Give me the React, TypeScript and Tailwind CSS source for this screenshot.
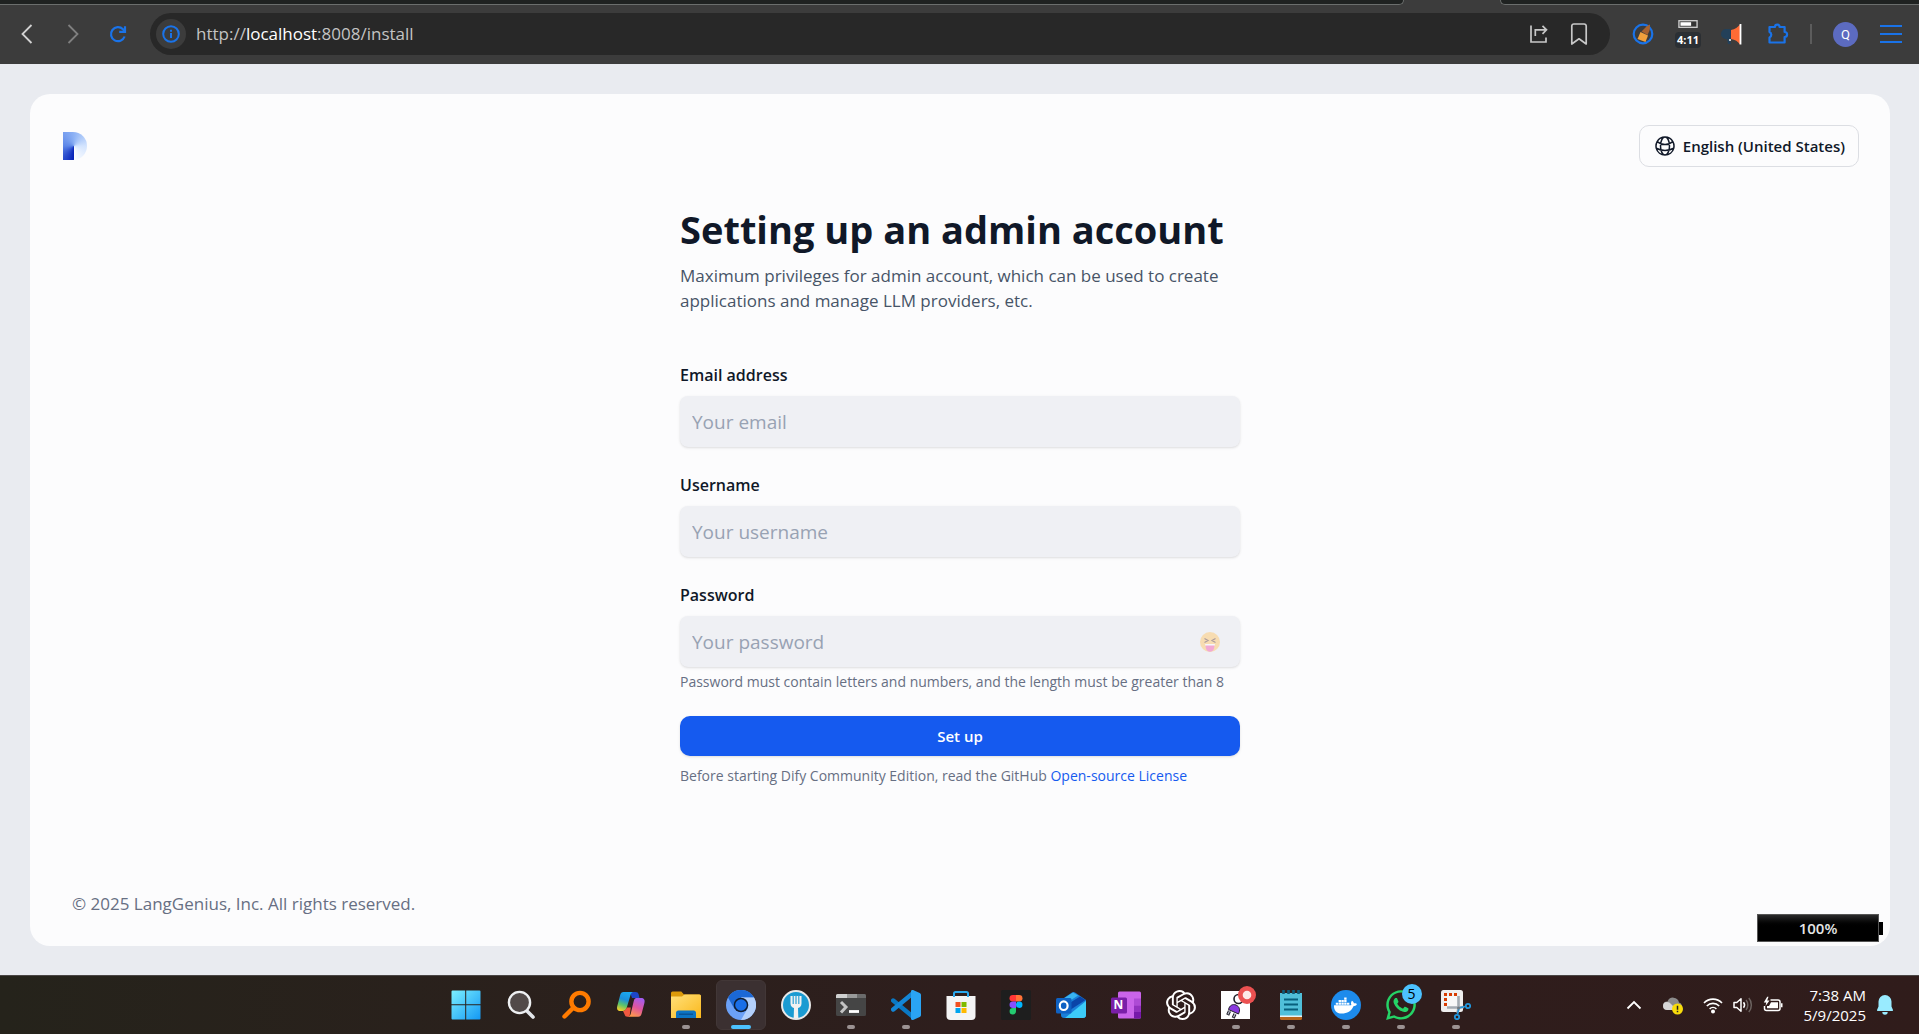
import type { ReactNode } from "react";
import { HiOutlineGlobeAlt } from "react-icons/hi2";
import { SiOpenai } from "react-icons/si";
import { FaDocker, FaWhatsapp } from "react-icons/fa";

function IconButton({ label, className = "", children }: { label: string; className?: string; children: ReactNode }) {
  return (
    <button type="button" aria-label={label} className={`flex shrink-0 items-center justify-center ${className}`}>
      {children}
    </button>
  );
}

/* ---------- Browser chrome ---------- */

function TabStrip() {
  return (
    <div className="flex h-[5px]">
      <div className="flex-1 rounded-br-lg border-r border-b border-[#6b6e6d] bg-[#1f2221]" />
      <div className="w-[96px]" />
      <div className="w-[419px] rounded-bl-lg border-b border-l border-[#6b6e6d] bg-[#1f2221]" />
    </div>
  );
}

function BrowserBar() {
  return (
    <header className="bg-[#3c3c3c]">
      <TabStrip />
      <div className="flex items-center px-[17px] pt-2 pb-[9px]">
        <IconButton label="Back" className="size-5">
          <svg width="20" height="22" viewBox="0 0 20 22" fill="none" stroke="#d2d2d2" strokeWidth="1.8">
            <path d="M14.500 2 5.500 11l9 9" />
          </svg>
        </IconButton>
        <IconButton label="Forward" className="ml-[26px] size-5">
          <svg width="20" height="22" viewBox="0 0 20 22" fill="none" stroke="#808080" strokeWidth="1.8">
            <path d="m5.500 2 9 9-9 9" />
          </svg>
        </IconButton>
        <IconButton label="Reload" className="ml-[25px] size-5">
          <svg width="20" height="20" viewBox="0 0 20 20" fill="none" stroke="#1a73e8" strokeWidth="2.200">
            <path d="M16.600 12.500A7 7 0 1 1 15 5.300l1.500 1.700" />
            <path d="M17 2.200v5.600h-5.800" />
          </svg>
        </IconButton>
        <div className="ml-[22px] flex h-[42px] flex-1 items-center rounded-full bg-[#282828] pr-[21px]">
          <IconButton label="Site information" className="ml-[6px] size-[30px] rounded-full bg-[#3c3c3c]">
            <svg width="18" height="18" viewBox="0 0 18 18" fill="none" stroke="#1a73e8" strokeWidth="2">
              <circle cx="9" cy="9" r="7.800" />
              <path d="M9 8v5M9 4.700v2" />
            </svg>
          </IconButton>
          <div className="ml-[10px] flex-1 text-[17px] leading-6 text-[#c3c3c3]">
            http://<span className="text-white">localhost</span>:8008/install
          </div>
          <IconButton label="Share" className="size-5">
            <svg width="20" height="20" viewBox="0 0 20 20" fill="none" stroke="#c7c7c7" strokeWidth="1.700">
              <path d="M2 1.500V18h15v-4.500M6.300 12V5.800H17M13.500 1.800l4 4-4 4" />
            </svg>
          </IconButton>
          <IconButton label="Bookmark" className="ml-5 size-5">
            <svg width="20" height="22" viewBox="0 0 20 22" fill="none" stroke="#c7c7c7" strokeWidth="1.700" strokeLinejoin="round">
              <path d="M2.800 3a2 2 0 0 1 2-2h10.400a2 2 0 0 1 2 2v18L10 15.800 2.800 21z" />
            </svg>
          </IconButton>
        </div>
        <IconButton label="Cleaner extension" className="ml-[22px] size-[22px]">
          <svg width="22" height="22" viewBox="0 0 22 22">
            <circle cx="11" cy="11" r="9.300" fill="none" stroke="#1a73e8" strokeWidth="2.200" />
            <path d="m15 3 3-1.500-.3 5.500-2.200 5-6-3.500z" fill="#a8622f" />
            <path d="m8.500 9 7.500 3.500-2.500 6.500-8-3z" fill="#f0a03c" />
          </svg>
        </IconButton>
        <IconButton label="Battery extension" className="ml-[18px] h-7 w-8 flex-col">
          <svg width="22" height="9" viewBox="0 0 22 9">
            <rect x=".8" y=".8" width="20.400" height="7.400" fill="#333" stroke="#d0d0d0" strokeWidth="1.500" />
            <rect x="2.500" y="2.500" width="12" height="4" fill="#fff" />
          </svg>
          <span className="mt-1 rounded-sm bg-[#2b2f33] px-0.5 text-[11px] leading-[16px] font-bold text-white">4:11</span>
        </IconButton>
        <IconButton label="Announcements extension" className="ml-[17px] size-[22px]">
          <svg width="22" height="22" viewBox="0 0 22 22">
            <path d="M10 6H5a4.500 4.500 0 0 0 0 10h1l1 5h3l-1-5h1z" fill="#234059" />
            <path d="M10 7c4-.5 7-3 9-5.500v20c-2-3-5-5-9-5.500z" fill="#ff6b35" />
            <path d="M19.500 1v20.500" stroke="#fff" strokeWidth="1.800" />
            <circle cx="9" cy="17" r="1" fill="#fff" />
          </svg>
        </IconButton>
        <IconButton label="Extensions" className="ml-6 size-[22px]">
          <svg width="22" height="22" viewBox="0 0 22 22" fill="none" stroke="#1a73e8" strokeWidth="2.200" strokeLinejoin="round">
            <path d="M2.500 4h5.500a2.300 2.300 0 0 1 4.600 0h5v5a2.500 2.500 0 0 1 0 5v5.500H2.500v-5a3 3 0 0 0 0-5.500z" />
          </svg>
        </IconButton>
        <div className="ml-[21px] h-5 w-[2px] bg-[#5c5c5c]" />
        <button type="button" className="ml-[21px] size-[25px] rounded-full bg-[#5c6bc0] font-[Roboto] text-[13px] leading-[25px] text-white">
          Q
        </button>
        <IconButton label="Menu" className="ml-[22px] size-[22px]">
          <svg width="22" height="20" viewBox="0 0 22 20" stroke="#1a73e8" strokeWidth="2.200">
            <path d="M0 2h22M0 10h22M0 18h22" />
          </svg>
        </IconButton>
      </div>
    </header>
  );
}

/* ---------- Page ---------- */

function Logo() {
  return (
    <div className="h-7 w-6 rounded-r-full bg-[conic-gradient(from_180deg_at_11px_14px,#0420b8,#5c86e8_25%,#8db2f5_50%,#d3e4fe_75%,#fbfcff)]" />
  );
}

function EmojiFace() {
  return (
    <svg width="20" height="20" viewBox="0 0 20 20" opacity=".5">
      <circle cx="10" cy="10" r="10" fill="#ffc971" />
      <path d="m4.500 6.500 3.500 2-3.500 2M15.500 6.500l-3.500 2 3.500 2" fill="none" stroke="#6b4a4a" strokeWidth="1.200" />
      <path d="M5 12h10l-.6 2H5.600z" fill="#fff" />
      <path d="M5.600 13.500h8.800c0 4-1.500 6.200-4.400 6.200s-4.400-2.200-4.400-6.200z" fill="#f564b4" />
    </svg>
  );
}

function Field({ id, label, type, placeholder, children }: { id: string; label: string; type: string; placeholder: string; children?: ReactNode }) {
  return (
    <div>
      <label htmlFor={id} className="block text-[16px] leading-6 font-semibold text-[#101828]">
        {label}
      </label>
      <div className="relative mt-[9px]">
        <input
          id={id}
          type={type}
          placeholder={placeholder}
          className="block h-[51px] w-full rounded-lg bg-[#eff0f4] px-3 text-[19px] shadow-sm placeholder:text-[#98a2b3]"
        />
        {children}
      </div>
    </div>
  );
}

function SetupForm() {
  return (
    <form className="mx-auto w-full max-w-[560px]">
      <h1 className="text-[38px] leading-[48px] font-bold text-[#101828]">Setting up an admin account</h1>
      <p className="mt-[10px] text-[17px] leading-[25px] text-[#475467]">
        Maximum privileges for admin account, which can be used to create applications and manage LLM providers, etc.
      </p>
      <div className="mt-[50px] flex flex-col gap-[26px]">
        <Field id="email" label="Email address" type="email" placeholder="Your email" />
        <Field id="username" label="Username" type="text" placeholder="Your username" />
        <Field id="password" label="Password" type="password" placeholder="Your password">
          <button type="button" aria-label="Show password" className="absolute inset-y-0 right-5 flex items-center">
            <EmojiFace />
          </button>
        </Field>
      </div>
      <p className="mt-[5px] text-[14px] leading-5 text-[#676f83]">
        Password must contain letters and numbers, and the length must be greater than 8
      </p>
      <button type="submit" className="mt-6 h-10 w-full rounded-[10px] bg-[#155aef] text-[15px] font-semibold text-white shadow-sm">
        Set up
      </button>
      <p className="mt-[10px] text-[14px] leading-5 text-[#676f83]">
        Before starting Dify Community Edition, read the GitHub{" "}
        <a href="#license" className="text-[#155aef]">
          Open-source License
        </a>
      </p>
    </form>
  );
}

function BatteryOverlay() {
  return (
    <div className="absolute right-[7px] bottom-1 flex items-center">
      <div className="w-[122px] border border-[#555] bg-linear-to-b from-[#2b2b2b] to-black to-50% text-center text-[15px] leading-[26px] font-semibold text-[#e5e5e5]">
        100%
      </div>
      <div className="h-[13px] w-1 bg-black" />
    </div>
  );
}

function InstallPage() {
  return (
    <main className="flex flex-1 flex-col bg-[#e9ebf0] pt-[30px] pr-[29px] pb-[29px] pl-[30px]">
      <div className="relative flex flex-1 flex-col rounded-[20px] bg-[#fcfcfd]">
        <div className="flex items-center justify-between pt-[31px] pr-[31px] pl-[33px]">
          <Logo />
          <button type="button" className="flex h-[42px] items-center gap-1.5 rounded-[10px] border border-[#dcdee3] px-[13px] text-[15px] font-semibold text-[#101828]">
            <HiOutlineGlobeAlt size={24} />
            English (United States)
          </button>
        </div>
        <div className="flex flex-1 flex-col px-6 pt-[38px]">
          <SetupForm />
        </div>
        <footer className="px-[42px] pb-[30px] text-[17px] leading-6 text-[#676f83]">
          © 2025 LangGenius, Inc. All rights reserved.
        </footer>
        <BatteryOverlay />
      </div>
    </main>
  );
}

/* ---------- Taskbar ---------- */

const WindowsIcon = (
  <svg width="30" height="30" viewBox="0 0 30 30">
    <defs>
      <linearGradient id="win" x1="0" y1="0" x2="1" y2="1">
        <stop offset="0" stopColor="#7cf0ff" />
        <stop offset="1" stopColor="#1398f5" />
      </linearGradient>
    </defs>
    <path d="M.5 1.500a1 1 0 0 1 1-1h12.700v13.700H.5zM15.200.5h13.300a1 1 0 0 1 1 1v12.700H15.200zM.5 15.200h13.700v14.300H1.500a1 1 0 0 1-1-1zM15.200 15.200h14.300v13.300a1 1 0 0 1-1 1H15.200z" fill="url(#win)" />
  </svg>
);
const SearchIcon = (
  <svg width="30" height="30" viewBox="0 0 30 30">
    <path d="m20 20 7 7" stroke="#e3e6ea" strokeWidth="3.600" strokeLinecap="round" />
    <circle cx="13.500" cy="12.500" r="10.600" fill="#524a49" stroke="#eef0f2" strokeWidth="2.400" />
  </svg>
);
const LoupeIcon = (
  <svg width="30" height="30" viewBox="0 0 30 30" fill="none" stroke="#ff7b00">
    <circle cx="19" cy="11.500" r="8.600" strokeWidth="4.400" />
    <path d="m12.500 17.500-9 9" strokeWidth="4.400" strokeLinecap="round" />
  </svg>
);
const CopilotIcon = (
  <svg width="30" height="30" viewBox="0 0 30 30">
    <defs>
      <linearGradient id="cpA" x1="0.600" y1="0" x2="0.300" y2="1">
        <stop offset="0" stopColor="#1aa9f0" />
        <stop offset=".4" stopColor="#1c8fdc" />
        <stop offset=".7" stopColor="#5cc46a" />
        <stop offset="1" stopColor="#f2ce2b" />
      </linearGradient>
      <linearGradient id="cpB" x1="0.700" y1="0" x2="0.300" y2="1">
        <stop offset="0" stopColor="#a35cf0" />
        <stop offset=".5" stopColor="#e0559d" />
        <stop offset="1" stopColor="#ff9a4a" />
      </linearGradient>
    </defs>
    <path d="M14 2h5.500c1.800 0 2.700.8 3.200 2.500L23.500 8H16z" fill="#1d46c8" />
    <path d="M7.500 2H17c-1.500.5-2 1.500-2.500 3l-3.700 12.500c-.7 2.300-1.800 3.500-4 3.500H4.500C1.500 21 .5 19 1.300 16L4.200 5c.6-2 1.500-3 3.300-3z" fill="url(#cpA)" />
    <path d="M7 21c2-.3 3-1.200 3.800-3.500h4l-1.300 9.300h-2c-1.800 0-2.500-.8-3-2.500z" fill="#f0583f" />
    <path d="M20 8h5c3 0 4.200 2 3.400 5l-2.800 10.800c-.6 2-1.500 3-3.300 3H12c1.500-.3 2.200-1.300 2.700-3l3-12.600c.5-1.800 1-2.700 2.300-3.200z" fill="url(#cpB)" />
  </svg>
);
const FolderIcon = (
  <svg width="30" height="30" viewBox="0 0 30 30">
    <defs>
      <linearGradient id="fold" x1="0" y1="0" x2="1" y2="1">
        <stop offset="0" stopColor="#ffe07a" />
        <stop offset="1" stopColor="#fbb81c" />
      </linearGradient>
    </defs>
    <path d="M0 3a1.500 1.500 0 0 1 1.500-1.500h8.800L13 4.500h15a2 2 0 0 1 2 2V10H0z" fill="#dc9a0a" />
    <path d="M0 6.500h11l2.500-2H28.500A1.500 1.500 0 0 1 30 6v22H0z" fill="url(#fold)" />
    <path d="M5 28v-5a2.500 2.500 0 0 1 2.500-2.500h15A2.500 2.500 0 0 1 25 23v5z" fill="#0c74c4" />
    <path d="M8 24.200h14" stroke="#0a4f8f" strokeWidth="1.300" />
  </svg>
);
const ChromiumIcon = (
  <svg width="30" height="30" viewBox="0 0 30 30">
    <circle cx="15" cy="15" r="15" fill="#6ba1f7" />
    <path d="M2 7.500a15 15 0 0 1 26 0H15L8.500 19z" fill="#1b68d6" />
    <path d="M28 7.500A15 15 0 0 1 15 30l6.500-11.300L15 7.500z" fill="#b3d0fb" />
    <circle cx="15" cy="15" r="7.300" fill="#111d30" />
    <circle cx="15" cy="15" r="5.800" fill="#1a6fe8" />
  </svg>
);
const ForkIcon = (
  <svg width="30" height="30" viewBox="0 0 30 30">
    <circle cx="15" cy="15" r="14" fill="#1a9bd2" stroke="#e9e9e9" strokeWidth="2" />
    <path d="M9.500 6v7.500c0 2.500 1.500 4 3.500 4.600L12.700 28h4.600l-.3-9.900c2-.6 3.500-2.100 3.500-4.600V6z" fill="#f1f1f1" />
    <path d="M12.200 5v9M15 5v9M17.800 5v9" stroke="#2fa3d6" strokeWidth="1.200" />
  </svg>
);
const TerminalIcon = (
  <svg width="30" height="30" viewBox="0 0 30 30">
    <path d="M0 5.500A1.500 1.500 0 0 1 1.500 4h27A1.500 1.500 0 0 1 30 5.500v19a1.500 1.500 0 0 1-1.500 1.500h-27A1.500 1.500 0 0 1 0 24.500z" fill="#454545" />
    <path d="M0 8V5.500A1.500 1.500 0 0 1 1.500 4H11v4z" fill="#d0d0d0" />
    <path d="M11 4h10v4H11z" fill="#999" />
    <path d="M21 4h7.500A1.500 1.500 0 0 1 30 5.500V8h-9z" fill="#6b6b6b" />
    <path d="m5 12 5 5-5 5.500" fill="none" stroke="#c4c4c4" strokeWidth="3" />
    <path d="M13 21.500h10" stroke="#fff" strokeWidth="2.800" />
  </svg>
);
const CodeIcon = (
  <svg width="30" height="30" viewBox="0 0 30 30">
    <path d="m2.200 10.500 20 16.500" stroke="#0a78c4" strokeWidth="4.400" strokeLinecap="round" />
    <path d="m2.200 19.500 20-16.500" stroke="#1486d6" strokeWidth="4.400" strokeLinecap="round" />
    <path d="M22 0l6.700 3A2 2 0 0 1 30 5v20a2 2 0 0 1-1.300 2L22 30c-1 .3-2-.7-2-1V1c0-.5 1-1.300 2-1z" fill="#2aa4f4" />
  </svg>
);
const StoreIcon = (
  <svg width="30" height="30" viewBox="0 0 30 30">
    <path d="M8 9V3.500A1.500 1.500 0 0 1 9.500 2h11A1.500 1.500 0 0 1 22 3.500V9" fill="none" stroke="#2aa8ee" strokeWidth="2" />
    <path d="M.5 6h29v20a4 4 0 0 1-4 4h-21a4 4 0 0 1-4-4z" fill="#f4f4f5" />
    <path d="M8 7V4M22 7V4" stroke="#2aa8ee" strokeWidth="2" />
    <path d="M9.500 12h5v5h-5z" fill="#f25022" />
    <path d="M15.500 12h5v5h-5z" fill="#7fba00" />
    <path d="M9.500 18h5v5h-5z" fill="#00a4ef" />
    <path d="M15.500 18h5v5h-5z" fill="#ffb900" />
  </svg>
);
const FigmaIcon = (
  <svg width="30" height="30" viewBox="0 0 30 30">
    <rect width="30" height="30" rx="1.500" fill="#1e1e1e" />
    <path d="M15 5h-3.200a3.200 3.200 0 0 0 0 6.500H15z" fill="#ff3737" />
    <path d="M15 5h3.200a3.200 3.200 0 0 1 0 6.500H15z" fill="#ff7237" />
    <path d="M15 11.500h-3.200a3.200 3.200 0 0 0 0 6.500H15z" fill="#874fff" />
    <circle cx="18.200" cy="14.800" r="3.250" fill="#00b6ff" />
    <path d="M15 18h-3.200a3.200 3.200 0 1 0 3.200 3.300z" fill="#24cb71" />
  </svg>
);
const OutlookIcon = (
  <svg width="30" height="30" viewBox="0 0 30 30">
    <path d="M5 10 16 2.500a3 3 0 0 1 3 0L30 10v15a3 3 0 0 1-3 3H8a3 3 0 0 1-3-3z" fill="#1a7fd8" />
    <path d="m7 9 10-6.500 5 3L9 14z" fill="#39b4f0" />
    <path d="m12 14 12-7.500 5.500 3.500L14 20z" fill="#0a44a8" />
    <path d="M30 11v14a3 3 0 0 1-3 3H9z" fill="#3ccbf8" />
    <rect y="8" width="15.500" height="15.500" rx="1.500" fill="#0f62c4" />
    <ellipse cx="7.700" cy="15.700" rx="3.900" ry="4.300" fill="none" stroke="#fff" strokeWidth="2.200" />
  </svg>
);
const OneNoteIcon = (
  <span className="relative block size-[30px]">
    <svg width="30" height="30" viewBox="0 0 30 30">
      <rect x="7" y="1.500" width="23" height="27" rx="1.500" fill="#ca64ea" />
      <path d="M23 8.500h7v7h-7z" fill="#ae4bd5" />
      <path d="M23 15.500h7v6.500h-7z" fill="#9332bf" />
      <path d="M23 22h7v5a1.500 1.500 0 0 1-1.500 1.500H23z" fill="#7719aa" />
      <rect y="7.500" width="16" height="16" rx="1.500" fill="#7a1fa8" />
    </svg>
    <span className="absolute top-[7px] left-0 w-4 text-center text-[12px] leading-4 font-bold text-white">N</span>
  </span>
);
const PlugIcon = (
  <span className="relative block size-[30px]">
    <svg width="30" height="30" viewBox="0 0 30 30">
      <rect y="1" width="29" height="28" fill="#fff" />
      <circle cx="17.500" cy="9" r="4.500" fill="none" stroke="#22222c" strokeWidth="1.600" />
      <path d="m8.500 21-1.800 4M14 24l-1.800 4" stroke="#22222c" strokeWidth="3.200" />
      <path d="m8.500 21-1.500 3.300M14 24l-1.500 3.300" stroke="#b9b9c6" strokeWidth="1.200" />
      <path d="M7.500 19.500c1-4 4-5.800 7.500-4.500 3.500 1.500 4.500 5 2.500 9z" fill="#8a3ae0" stroke="#22222c" strokeWidth="1" />
    </svg>
    <svg width="18" height="18" viewBox="0 0 18 18" className="absolute -top-1 left-[17px]">
      <circle cx="9" cy="9" r="9" fill="#eb5151" />
      <circle cx="9" cy="9" r="4.300" fill="#fde9e7" />
    </svg>
  </span>
);
const NotepadIcon = (
  <svg width="30" height="30" viewBox="0 0 30 30">
    <path d="M4 26h22v2.500a1.500 1.500 0 0 1-1.500 1.500h-19A1.500 1.500 0 0 1 4 28.500z" fill="#b5651d" />
    <path d="M4 3h22v22.500a1 1 0 0 1-1 1H5a1 1 0 0 1-1-1z" fill="#50bfd9" />
    <path d="M4 25.500h22v1.500H4z" fill="#e9f5f8" />
    <path d="M8 9.500h14M8 14.500h14M8 19.500h14" stroke="#075f7c" strokeWidth="2" />
    <path d="M7.500 0v4M12.500 0v4M17.500 0v4M22.500 0v4" stroke="#0d5a78" strokeWidth="2.600" />
  </svg>
);
const DockerIcon = (
  <span className="flex size-[30px] items-center justify-center rounded-full bg-[#1d8bec] text-white">
    <FaDocker size={23} />
  </span>
);
const WhatsAppIcon = (
  <span className="relative block size-[30px]">
    <FaWhatsapp size={34} color="#25d366" className="-mt-0.5 -ml-0.5" />
    <span className="absolute -top-[6px] left-4 size-5 rounded-full bg-[#4cc2ff] text-center text-[14px] leading-5 text-black">5</span>
  </span>
);
const SnipIcon = (
  <svg width="30" height="30" viewBox="0 0 30 30">
    <rect width="22" height="22" rx="2.500" fill="#efefef" />
    <path d="M6 6h12v12H6z" fill="#f8f8f8" />
    <path d="M3 4.500h3M8 4.500h3M13 4.500h3M4.500 8v3M4.500 13v3" stroke="#d83b01" strokeWidth="3" />
    <path d="M6 17.500h12l5-.5M17.500 6v12l-1 5" fill="none" stroke="#a4abb2" strokeWidth="2.600" />
    <path d="m18 18-1.500 6M18 18l6-1.500" stroke="#2196dd" strokeWidth="1.600" />
    <circle cx="17.500" cy="18" r="1.500" fill="#72797f" />
    <circle cx="16" cy="27" r="2.200" fill="none" stroke="#2196dd" strokeWidth="1.800" />
    <circle cx="27" cy="16" r="2.200" fill="none" stroke="#2196dd" strokeWidth="1.800" />
  </svg>
);

const apps: { name: string; icon: ReactNode; state?: "open" | "active" }[] = [
  { name: "Start", icon: WindowsIcon },
  { name: "Search", icon: SearchIcon },
  { name: "Everything", icon: LoupeIcon },
  { name: "Copilot", icon: CopilotIcon },
  { name: "File Explorer", icon: FolderIcon, state: "open" },
  { name: "Chromium", icon: ChromiumIcon, state: "active" },
  { name: "Fork", icon: ForkIcon },
  { name: "Terminal", icon: TerminalIcon, state: "open" },
  { name: "Visual Studio Code", icon: CodeIcon, state: "open" },
  { name: "Microsoft Store", icon: StoreIcon },
  { name: "Figma", icon: FigmaIcon },
  { name: "Outlook", icon: OutlookIcon },
  { name: "OneNote", icon: OneNoteIcon },
  { name: "ChatGPT", icon: <SiOpenai size={30} color="#fff" /> },
  { name: "Plug", icon: PlugIcon, state: "open" },
  { name: "Notepad", icon: NotepadIcon, state: "open" },
  { name: "Docker Desktop", icon: DockerIcon, state: "open" },
  { name: "WhatsApp", icon: WhatsAppIcon, state: "open" },
  { name: "Snipping Tool", icon: SnipIcon, state: "open" },
];

function Tray() {
  return (
    <div className="flex items-center justify-end pr-[25px]">
      <IconButton label="Show hidden icons" className="size-4">
        <svg width="16" height="16" viewBox="0 0 16 16" fill="none" stroke="#fff" strokeWidth="1.800">
          <path d="m1.500 11.500 6.500-6.500 6.500 6.500" />
        </svg>
      </IconButton>
      <IconButton label="OneDrive" className="ml-[21px] size-5">
        <svg width="20" height="20" viewBox="0 0 20 20">
          <path d="M4 14.500a4 4 0 0 1 .5-8A6 6 0 0 1 16 7.500a3.800 3.800 0 0 1 1 7z" fill="#8b8b8b" />
          <path d="M4 15a4 4 0 0 1 0-8c2 0 3 .8 4 2l6 6z" fill="#d6d6d6" />
          <circle cx="14.500" cy="14" r="5.500" fill="#f8dc0b" />
          <path d="M14.500 10.800v4M14.500 15.800v1.400" stroke="#222" strokeWidth="1.500" />
        </svg>
      </IconButton>
      <IconButton label="Network" className="ml-5 size-5">
        <svg width="20" height="18" viewBox="0 0 20 18" fill="none" stroke="#fff" strokeWidth="1.600">
          <path d="M1 7a12.500 12.500 0 0 1 18 0M3.800 10a8.700 8.700 0 0 1 12.400 0M6.600 12.800a4.900 4.900 0 0 1 6.800 0" />
          <circle cx="10" cy="15.500" r="1.200" fill="#fff" />
        </svg>
      </IconButton>
      <IconButton label="Volume" className="ml-[10px] size-5">
        <svg width="20" height="18" viewBox="0 0 20 18" fill="none" stroke="#fff" strokeWidth="1.500">
          <path d="M1 6.500h2.800L8 2.800v12.400l-4.200-3.700H1z" strokeLinejoin="round" />
          <path d="M10.500 6.300c1.200 1.500 1.200 3.900 0 5.400" />
          <path d="M13 4c2.400 2.700 2.400 7.300 0 10M15.800 2c3.400 3.800 3.400 10.200 0 14" stroke="#6c6360" />
        </svg>
      </IconButton>
      <IconButton label="Battery" className="ml-[10px] size-5">
        <svg width="20" height="18" viewBox="0 0 20 18">
          <path d="M7.500 4H15a2 2 0 0 1 2 2v6.500a2 2 0 0 1-2 2H3.500a2 2 0 0 1-2-2V10" fill="none" stroke="#fff" strokeWidth="1.500" />
          <path d="M8 6.200h7v6H4V10h2z" fill="#fff" />
          <path d="M18 7.200h1.500v4H18z" fill="#fff" />
          <path d="M4.200.8.8 6.500h2.500L2.500 10l4-5.500H4.200l1.300-3.700z" fill="#fff" />
        </svg>
      </IconButton>
      <div className="ml-[21px] text-right text-[15px] leading-5 text-white">
        <div>7:38 AM</div>
        <div>5/9/2025</div>
      </div>
      <IconButton label="Notifications" className="ml-[10px] size-[18px]">
        <svg width="18" height="20" viewBox="0 0 18 20" fill="#99ebff">
          <path d="M9 0a6.500 6.500 0 0 1 6.500 6.500v5l1.500 3.500a.8.8 0 0 1-.8 1H1.800a.8.8 0 0 1-.8-1l1.500-3.500v-5A6.500 6.500 0 0 1 9 0zM6.300 17h5.400a2.700 2.700 0 0 1-5.400 0z" />
        </svg>
      </IconButton>
    </div>
  );
}

function Taskbar() {
  return (
    <nav
      aria-label="Taskbar"
      className="grid h-[59px] grid-cols-[1fr_auto_1fr] border-t border-[#4a4645] bg-linear-to-r from-[#25231b] via-[#2e1e1d] to-[#301c1b] pl-0.5"
    >
      <div />
      <div className="flex items-center">
        {apps.map(({ name, icon, state }) => (
          <div key={name} className="flex w-[55px] justify-center">
            <button
              type="button"
              aria-label={name}
              className={`relative flex size-[50px] items-center justify-center rounded-md ${state === "active" ? "border border-[#423737] bg-[#3b3031]" : ""}`}
            >
              {icon}
              {state === "active" && <span className="absolute bottom-0 h-1 w-5 rounded-full bg-[#4cc2ff]" />}
              {state === "open" && <span className="absolute bottom-px h-1 w-2 rounded-full bg-[#9b9292]" />}
            </button>
          </div>
        ))}
      </div>
      <Tray />
    </nav>
  );
}

export default function App() {
  return (
    <div className="flex min-h-screen flex-col font-['Open_Sans',sans-serif]">
      <BrowserBar />
      <InstallPage />
      <Taskbar />
    </div>
  );
}
